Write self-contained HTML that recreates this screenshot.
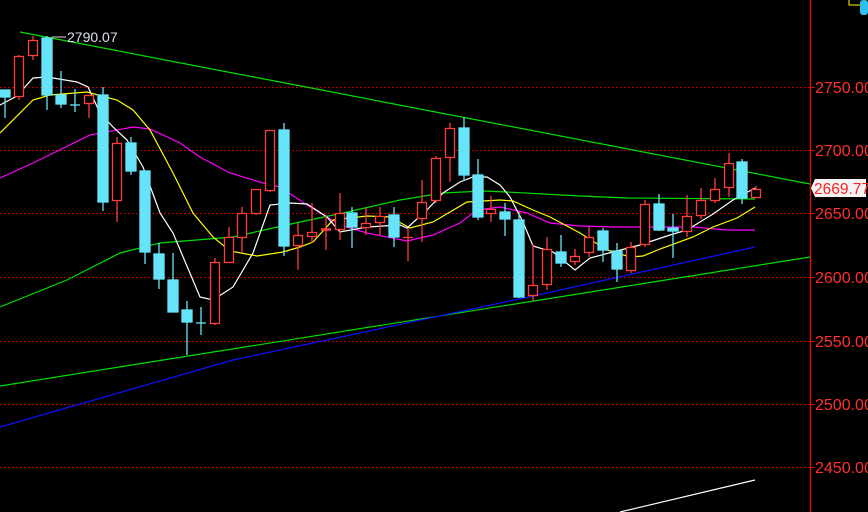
<!DOCTYPE html>
<html><head><meta charset="utf-8"><style>
html,body{margin:0;padding:0;background:#000;width:868px;height:512px;overflow:hidden}
svg{display:block}
text{font-family:"Liberation Sans",sans-serif}
</style></head><body>
<svg width="868" height="512" viewBox="0 0 868 512" xmlns="http://www.w3.org/2000/svg">
<rect width="868" height="512" fill="#000"/>
<g stroke="#c00000" stroke-width="1" stroke-dasharray="2,2">
<line x1="0" y1="87.5" x2="810" y2="87.5"/><line x1="0" y1="150.5" x2="810" y2="150.5"/>
<line x1="0" y1="213.5" x2="810" y2="213.5"/><line x1="0" y1="277.5" x2="810" y2="277.5"/>
<line x1="0" y1="341.5" x2="810" y2="341.5"/><line x1="0" y1="404.5" x2="810" y2="404.5"/>
<line x1="0" y1="467.5" x2="810" y2="467.5"/>
</g>
<g fill="none" stroke-width="1.2">
<line x1="20" y1="32" x2="810" y2="184" stroke="#00e000"/>
<line x1="0" y1="386" x2="810" y2="257" stroke="#00e000"/>
<polyline stroke="#1010ff" points="0,427 233,360 533,296 755,247"/>
<polyline stroke="#00e000" points="0,307 67,280 120,253 160,243 233,237 300,222 343,213 400,200 443,193 483,191 507,192 580,196 627,198 755,199"/>
<polyline stroke="#ff00ff" points="0,178 33,163 90,135 133,127 150,129 180,143 200,157 230,173 263,183 280,187 307,205 327,217 340,225 367,233 407,241 433,235 460,223 477,210 500,207 527,213 550,223 580,226 613,227 693,227 727,230 755,230"/>
<polyline stroke="#ffff00" points="0,133 33,100 50,95 87,92 117,100 133,110 150,130 173,173 193,213 213,237 230,251 257,256 283,252 300,247 313,242 333,220 367,216 390,217 410,228 433,222 467,202 500,200 513,201 533,210 550,217 580,233 607,250 630,257 643,256 660,249 693,237 713,227 737,218 755,207"/>
<polyline stroke="#ffffff" points="0,105 17,96 33,78 47,77 77,82 88,87 100,113 113,127 127,140 143,167 160,213 173,233 200,297 213,300 233,287 253,253 270,205 290,203 307,204 327,217 340,232 367,227 400,225 407,228 427,210 443,193 460,182 473,177 487,177 500,185 510,197 523,222 533,246 553,252 575,270 590,258 613,252 640,245 670,235 687,230 713,214 733,200 755,188"/>
<line x1="620" y1="512" x2="755" y2="480" stroke="#ffffff"/>
</g>
<g stroke-width="1.3">
<g fill="#66e4fa" stroke="#66e4fa">
<line x1="5" y1="90" x2="5" y2="118"/><rect x="0" y="90" width="10" height="7"/>
<line x1="47" y1="36" x2="47" y2="110"/><rect x="42" y="38" width="10" height="57"/>
<line x1="61" y1="71" x2="61" y2="108"/><rect x="56" y="95" width="10" height="9"/>
<line x1="75" y1="89" x2="75" y2="112"/><line x1="70" y1="105" x2="80" y2="105"/>
<line x1="103" y1="87" x2="103" y2="211"/><rect x="98" y="95" width="10" height="107"/>
<line x1="131" y1="137" x2="131" y2="175"/><rect x="126" y="143" width="10" height="28"/>
<line x1="145" y1="171" x2="145" y2="264"/><rect x="140" y="171" width="10" height="81"/>
<line x1="159" y1="243" x2="159" y2="289"/><rect x="154" y="254" width="10" height="25"/>
<line x1="173" y1="253" x2="173" y2="312"/><rect x="168" y="280" width="10" height="32"/>
<line x1="187" y1="301" x2="187" y2="355"/><rect x="182" y="310" width="10" height="12"/>
<line x1="201" y1="307" x2="201" y2="335"/><line x1="196" y1="323" x2="206" y2="323"/>
<line x1="284" y1="123" x2="284" y2="256"/><rect x="279" y="130" width="10" height="116"/>
<line x1="352" y1="207" x2="352" y2="248"/><rect x="347" y="213" width="10" height="14"/>
<line x1="394" y1="207" x2="394" y2="247"/><rect x="389" y="215" width="10" height="22"/>
<line x1="464" y1="117" x2="464" y2="181"/><rect x="459" y="128" width="10" height="47"/>
<line x1="478" y1="159" x2="478" y2="220"/><rect x="473" y="175" width="10" height="42"/>
<line x1="505" y1="203" x2="505" y2="236"/><rect x="500" y="212" width="10" height="7"/>
<line x1="519" y1="212" x2="519" y2="298"/><rect x="514" y="220" width="10" height="77"/>
<line x1="561" y1="235" x2="561" y2="267"/><rect x="556" y="252" width="10" height="11"/>
<line x1="603" y1="228" x2="603" y2="262"/><rect x="598" y="231" width="10" height="19"/>
<line x1="617" y1="243" x2="617" y2="282"/><rect x="612" y="251" width="10" height="18"/>
<line x1="659" y1="194" x2="659" y2="231"/><rect x="654" y="204" width="10" height="26"/>
<line x1="673" y1="214" x2="673" y2="258"/><rect x="668" y="228" width="10" height="3"/>
<line x1="742" y1="159" x2="742" y2="204"/><rect x="737" y="162" width="10" height="36"/>
</g>
<g fill="#000" stroke="#ff3c3c">
<line x1="19" y1="55" x2="19" y2="100"/><rect x="14.5" y="56.5" width="9" height="40"/>
<line x1="33" y1="36" x2="33" y2="60"/><rect x="28.5" y="40.5" width="9" height="15"/>
<line x1="89" y1="95" x2="89" y2="118"/><rect x="84.5" y="95.5" width="9" height="8"/>
<line x1="117" y1="137" x2="117" y2="222"/><rect x="112.5" y="143.5" width="9" height="57"/>
<line x1="215" y1="258" x2="215" y2="325"/><rect x="210.5" y="262.5" width="9" height="61"/>
<line x1="229" y1="227" x2="229" y2="263"/><rect x="224.5" y="237.5" width="9" height="25"/>
<line x1="242" y1="207" x2="242" y2="253"/><rect x="237.5" y="213.5" width="9" height="24"/>
<line x1="256" y1="189" x2="256" y2="215"/><rect x="251.5" y="189.5" width="9" height="24"/>
<line x1="270" y1="130" x2="270" y2="192"/><rect x="265.5" y="130.5" width="9" height="60"/>
<line x1="298" y1="223" x2="298" y2="270"/><rect x="293.5" y="235.5" width="9" height="10"/>
<line x1="312" y1="203" x2="312" y2="243"/><rect x="307.5" y="232.5" width="9" height="4"/>
<line x1="326" y1="215" x2="326" y2="250"/><line x1="321" y1="229.5" x2="331" y2="229.5" stroke-width="2.5"/>
<line x1="340" y1="193" x2="340" y2="240"/><rect x="335.5" y="213.5" width="9" height="16"/>
<line x1="366" y1="208" x2="366" y2="235"/><rect x="361.5" y="223.5" width="9" height="4"/>
<line x1="380" y1="207" x2="380" y2="235"/><rect x="375.5" y="216.5" width="9" height="6"/>
<line x1="408" y1="228" x2="408" y2="261"/><line x1="403" y1="237.5" x2="413" y2="237.5"/>
<line x1="422" y1="180" x2="422" y2="242"/><rect x="417.5" y="202.5" width="9" height="16"/>
<line x1="436" y1="156" x2="436" y2="203"/><rect x="431.5" y="158.5" width="9" height="42"/>
<line x1="450" y1="123" x2="450" y2="182"/><rect x="445.5" y="128.5" width="9" height="29"/>
<line x1="491" y1="196" x2="491" y2="222"/><rect x="486.5" y="209.5" width="9" height="4"/>
<line x1="533" y1="244" x2="533" y2="301"/><rect x="528.5" y="285.5" width="9" height="10"/>
<line x1="547" y1="237" x2="547" y2="290"/><rect x="542.5" y="249.5" width="9" height="35"/>
<line x1="575" y1="249" x2="575" y2="265"/><rect x="570.5" y="256.5" width="9" height="5"/>
<line x1="589" y1="227" x2="589" y2="257"/><rect x="584.5" y="237.5" width="9" height="15"/>
<line x1="631" y1="242" x2="631" y2="273"/><rect x="626.5" y="247.5" width="9" height="23"/>
<line x1="645" y1="200" x2="645" y2="247"/><rect x="640.5" y="204.5" width="9" height="40"/>
<line x1="687" y1="195" x2="687" y2="237"/><rect x="682.5" y="216.5" width="9" height="15"/>
<line x1="701" y1="188" x2="701" y2="219"/><rect x="696.5" y="200.5" width="9" height="15"/>
<line x1="715" y1="178" x2="715" y2="203"/><rect x="710.5" y="189.5" width="9" height="11"/>
<line x1="729" y1="153" x2="729" y2="197"/><rect x="724.5" y="163.5" width="9" height="24"/>
<line x1="756" y1="186" x2="756" y2="198"/><rect x="751.5" y="189.5" width="9" height="8"/>
</g>
</g>
<line x1="52" y1="37" x2="66" y2="37" stroke="#ddd"/>
<text x="67" y="42" font-size="14" fill="#d8e0ec">2790.07</text>
<line x1="810.5" y1="0" x2="810.5" y2="512" stroke="#d01010" stroke-width="1.5"/>
<g stroke="#d01010"><line x1="811" y1="87.5" x2="815" y2="87.5"/><line x1="811" y1="150.5" x2="815" y2="150.5"/><line x1="811" y1="213.5" x2="815" y2="213.5"/><line x1="811" y1="277.5" x2="815" y2="277.5"/><line x1="811" y1="341.5" x2="815" y2="341.5"/><line x1="811" y1="404.5" x2="815" y2="404.5"/><line x1="811" y1="467.5" x2="815" y2="467.5"/></g>
<polyline points="849,0 849,5 860,5" fill="none" stroke="#ffff00"/>
<rect x="860" y="0" width="8" height="15" rx="3" fill="#30c0f0"/>
<g font-size="16" fill="#ff3030">
<text x="815" y="93">2750.00</text><text x="815" y="156">2700.00</text>
<text x="815" y="219">2650.00</text><text x="815" y="283">2600.00</text>
<text x="815" y="347">2550.00</text><text x="815" y="410">2500.00</text>
<text x="815" y="473">2450.00</text>
</g>
<polygon points="811,188 815,179 866,179 866,197 815,197" fill="#f4f4f4"/>
<text x="814" y="194" font-size="15.5" fill="#ff2020">2669.77</text>
</svg>
</body></html>
